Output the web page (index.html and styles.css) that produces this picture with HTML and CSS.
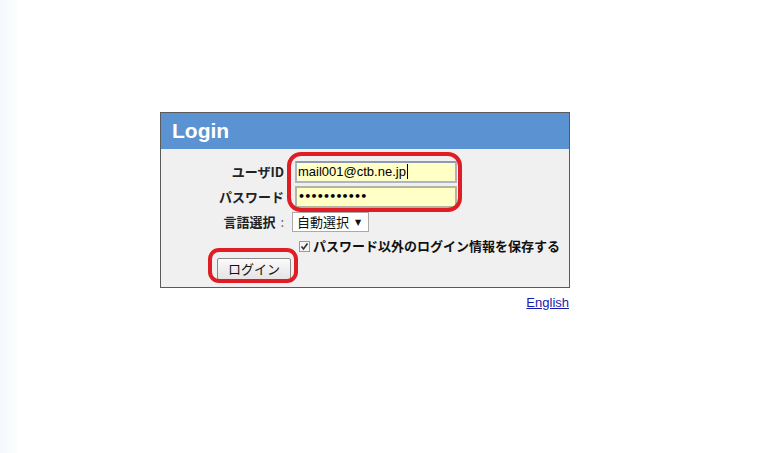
FILE: index.html
```html
<!DOCTYPE html>
<html lang="ja">
<head>
<meta charset="utf-8">
<link rel="stylesheet" href="styles.css">
</head>
<body>
<div class="page">
  <div class="wrap">
    <div class="box">
      <div class="head">Login</div>
      <div class="body">
        <div class="grid">
          <div class="lbl">ユーザID</div>
          <div class="field"><div class="inp">mail001@ctb.ne.jp<span class="caret"></span></div></div>
          <div class="lbl">パスワード</div>
          <div class="field"><div class="inp pw">•••••••••••</div></div>
          <div class="lbl">言語選択 <span class="colon">:</span></div>
          <div class="field"><div class="sel">自動選択 <span class="arr">▼</span></div></div>
          <div></div>
          <div class="chkrow"><span class="chk"><svg width="11" height="11" viewBox="0 0 11 11"><rect x="0.5" y="0.5" width="10" height="10" fill="#f4f4f4" stroke="#9a9a9a"/><path d="M2.5 5.5 L4.5 8 L8.5 2.5" fill="none" stroke="#333" stroke-width="1.6"/></svg></span><b>パスワード以外のログイン情報を保存する</b></div>
        </div>
        <div class="btnrow"><div class="btn">ログイン</div></div>
      </div>
      <div class="ring r1"></div>
      <div class="ring r2"></div>
    </div>
    <div class="foot"><a href="#">English</a></div>
  </div>
</div>
</body>
</html>
```
FILE: styles.css
```css
html, body { margin: 0; padding: 0; }
body {
  font-family: "Noto Sans CJK JP", "Liberation Sans", sans-serif;
  font-size: 13px;
  color: #111;
  background: linear-gradient(to right, #f5f9fd 0px, #fafcfe 14px, #ffffff 20px);
  width: 766px;
  height: 453px;
  overflow: hidden;
}
.page { padding: 112px 0 0 160px; }
.wrap { width: 410px; }
.box {
  position: relative;
  border: 1px solid #5a5a5a;
  background: #f0f0f0;
  height: 174px;
  box-sizing: content-box;
  width: 408px;
}
.head {
  background: #5b93d2;
  color: #fff;
  font-family: "Liberation Sans", Arial, sans-serif;
  font-weight: bold;
  font-size: 21px;
  height: 36px;
  line-height: 36px;
  padding-left: 11px;
}
.body { padding: 12px 0 0 0; }
.grid {
  display: grid;
  grid-template-columns: 123px 1fr;
  column-gap: 10px;
  row-gap: 3px;
  align-items: center;
}
.lbl {
  text-align: right;
  font-weight: bold;
  font-size: 13px;
  color: #222;
  line-height: 22px;
}
.colon { font-weight: normal; color: #666; margin-left: 2px; }
.inp {
  width: 157px;
  height: 18px;
  margin-left: 1px;
  background: #ffffc6;
  border: 2px solid #aab6c8;
  border-top-color: #8e9ab0;
  font-family: "Liberation Sans", Arial, sans-serif;
  font-size: 13px;
  line-height: 18px;
  padding-left: 1px;
  color: #000;
}
.inp.pw {
  border-color: #b4b4a0;
  font-family: "DejaVu Sans", sans-serif;
  font-weight: bold;
  letter-spacing: -0.8px;
  font-size: 11px;
}
.caret { display: inline-block; width: 1px; height: 15px; background: #000; vertical-align: -3px; margin-left: 1px; }
.sel {
  display: inline-block;
  margin-left: -2px;
  background: #fff;
  border: 1px solid #aaa;
  height: 18px;
  line-height: 18px;
  padding: 0 7px 0 4px;
  font-size: 13px;
  color: #111;
}
.arr { font-family: "DejaVu Sans", sans-serif; font-size: 8px; vertical-align: 2px; margin-left: 3px; }
.chkrow {
  display: flex;
  align-items: center;
  gap: 3px;
  margin-left: 5px;
  margin-top: 1px;
  font-size: 13px;
  color: #111;
  line-height: 18px;
}
.chk { display: flex; }
.btnrow { padding: 3px 0 0 56px; }
.btn {
  width: 72px;
  height: 20px;
  line-height: 20px;
  text-align: center;
  border: 1px solid #8a8a8a;
  border-radius: 2px;
  background: linear-gradient(#fafafa, #e4e4e4);
  font-size: 13px;
  color: #111;
}
.ring {
  position: absolute;
  border: 4px solid #e01c24;
  border-radius: 12px;
}
.r1 { left: 126px; top: 39px; width: 167px; height: 52px; border-radius: 14px; }
.r2 { left: 47px; top: 135px; width: 82px; height: 27px; border-radius: 11px; }
.foot { text-align: right; padding-top: 4px; padding-right: 1px; }
.foot a {
  color: #1a1aa8;
  font-family: "Liberation Sans", Arial, sans-serif;
  font-size: 13px;
  text-decoration: underline;
}
```
